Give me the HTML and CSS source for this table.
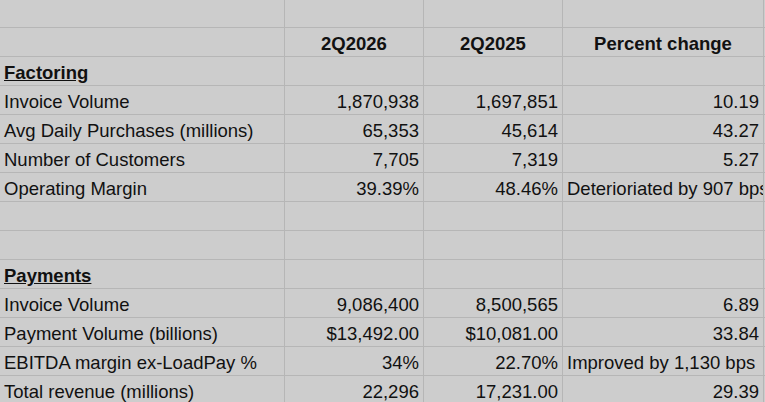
FILE: index.html
```html
<!DOCTYPE html>
<html>
<head>
<meta charset="utf-8">
<link rel="stylesheet" href="styles.css">
</head>
<body>
<div class="sheet">
  <div class="c first"></div><div class="c first"></div><div class="c first"></div><div class="c first"></div><div class="c first"></div>

  <div class="c"></div><div class="c hd">2Q2026</div><div class="c hd">2Q2025</div><div class="c hd">Percent change</div><div class="c"></div>

  <div class="c sec">Factoring</div><div class="c"></div><div class="c"></div><div class="c"></div><div class="c"></div>

  <div class="c">Invoice Volume</div><div class="c num">1,870,938</div><div class="c num">1,697,851</div><div class="c num">10.19</div><div class="c"></div>
  <div class="c">Avg Daily Purchases (millions)</div><div class="c num">65,353</div><div class="c num">45,614</div><div class="c num">43.27</div><div class="c"></div>
  <div class="c">Number of Customers</div><div class="c num">7,705</div><div class="c num">7,319</div><div class="c num">5.27</div><div class="c"></div>
  <div class="c">Operating Margin</div><div class="c num">39.39%</div><div class="c num">48.46%</div><div class="c">Deterioriated by 907 bps</div><div class="c"></div>

  <div class="c"></div><div class="c"></div><div class="c"></div><div class="c"></div><div class="c"></div>
  <div class="c"></div><div class="c"></div><div class="c"></div><div class="c"></div><div class="c"></div>

  <div class="c sec">Payments</div><div class="c"></div><div class="c"></div><div class="c"></div><div class="c"></div>

  <div class="c">Invoice Volume</div><div class="c num">9,086,400</div><div class="c num">8,500,565</div><div class="c num">6.89</div><div class="c"></div>
  <div class="c">Payment Volume (billions)</div><div class="c num">$13,492.00</div><div class="c num">$10,081.00</div><div class="c num">33.84</div><div class="c"></div>
  <div class="c">EBITDA margin ex-LoadPay %</div><div class="c num">34%</div><div class="c num">22.70%</div><div class="c">Improved by 1,130 bps</div><div class="c"></div>
  <div class="c">Total revenue (millions)</div><div class="c num">22,296</div><div class="c num">17,231.00</div><div class="c num">29.39</div><div class="c"></div>
</div>
</body>
</html>
```
FILE: styles.css
```css
html, body {
  margin: 0;
  padding: 0;
  background: #cdcdcd;
  overflow: hidden;
}

.sheet {
  display: grid;
  grid-template-columns: 284px 138px 138px 200px 20px;
  grid-template-rows: 27px;
  grid-auto-rows: 28px;
  gap: 1px;
  background: #b6b6b6;
  width: 785px;
  font-family: "Liberation Sans", Arial, sans-serif;
  font-size: 18.5px;
  color: #111111;
}

.c {
  background: #cdcdcd;
  line-height: 24px;
  padding: 4px 4px 0 4px;
  white-space: nowrap;
  overflow: hidden;
  box-sizing: border-box;
}

.num {
  text-align: right;
}

.hd {
  text-align: center;
  font-weight: bold;
}

.sec {
  font-weight: bold;
  text-decoration: underline;
}
```
